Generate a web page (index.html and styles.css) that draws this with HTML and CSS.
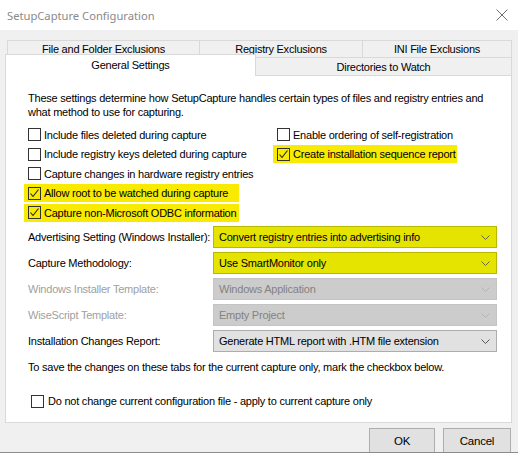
FILE: index.html
```html
<!DOCTYPE html>
<html>
<head>
<meta charset="utf-8">
<title>SetupCapture Configuration</title>
<link rel="stylesheet" href="styles.css">
</head>
<body>
<div class="window">
  <div class="titlebar">
    <span class="title">SetupCapture Configuration</span>
    <svg class="close" width="12" height="12" viewBox="0 0 12 12"><path d="M0.5 0.5L11.5 11.5M11.5 0.5L0.5 11.5" stroke="#6f6f6f" stroke-width="1" fill="none"/></svg>
  </div>
  <div class="tabs">
    <div class="tabrow row1">
      <div class="tab t1">File and Folder Exclusions</div>
      <div class="tab t2">Registry Exclusions</div>
      <div class="tab t3">INI File Exclusions</div>
    </div>
    <div class="tabrow row2">
      <div class="tab sel">General Settings</div>
      <div class="tab t5">Directories to Watch</div>
    </div>
  </div>
  <div class="panel">
    <p class="desc">These settings determine how SetupCapture handles certain types of files and registry entries and<br>what method to use for capturing.</p>
    <div class="checks">
      <label class="cb"><span class="box"></span><span>Include files deleted during capture</span></label>
      <label class="cb"><span class="box"></span><span>Enable ordering of self-registration</span></label>
      <label class="cb"><span class="box"></span><span>Include registry keys deleted during capture</span></label>
      <label class="cb hl hl-right"><span class="box"><svg width="11" height="11" viewBox="0 0 11 11"><path d="M1.5 5.5L4 8.5L9.5 1.5" stroke="#222" stroke-width="1.1" fill="none"/></svg></span><span>Create installation sequence report</span></label>
      <label class="cb"><span class="box"></span><span>Capture changes in hardware registry entries</span></label>
      <span class="empty"></span>
      <label class="cb hl hl-left"><span class="box"><svg width="11" height="11" viewBox="0 0 11 11"><path d="M1.5 5.5L4 8.5L9.5 1.5" stroke="#222" stroke-width="1.1" fill="none"/></svg></span><span>Allow root to be watched during capture</span></label>
      <span class="empty"></span>
      <label class="cb hl hl-left"><span class="box"><svg width="11" height="11" viewBox="0 0 11 11"><path d="M1.5 5.5L4 8.5L9.5 1.5" stroke="#222" stroke-width="1.1" fill="none"/></svg></span><span>Capture non-Microsoft ODBC information</span></label>
    </div>
    <div class="combos">
      <span class="lbl">Advertising Setting (Windows Installer):</span>
      <div class="combo yellow"><span>Convert registry entries into advertising info</span><svg width="9" height="5" viewBox="0 0 9 5"><path d="M0.5 0.5L4.5 4.5L8.5 0.5" stroke="#6b6b2a" fill="none"/></svg></div>
      <span class="lbl">Capture Methodology:</span>
      <div class="combo yellow"><span>Use SmartMonitor only</span><svg width="9" height="5" viewBox="0 0 9 5"><path d="M0.5 0.5L4.5 4.5L8.5 0.5" stroke="#6b6b2a" fill="none"/></svg></div>
      <span class="lbl disabled">Windows Installer Template:</span>
      <div class="combo off"><span>Windows Application</span><svg width="9" height="5" viewBox="0 0 9 5"><path d="M0.5 0.5L4.5 4.5L8.5 0.5" stroke="#b4b4b4" fill="none"/></svg></div>
      <span class="lbl disabled">WiseScript Template:</span>
      <div class="combo off"><span>Empty Project</span><svg width="9" height="5" viewBox="0 0 9 5"><path d="M0.5 0.5L4.5 4.5L8.5 0.5" stroke="#b4b4b4" fill="none"/></svg></div>
      <span class="lbl">Installation Changes Report:</span>
      <div class="combo"><span>Generate HTML report with .HTM file extension</span><svg width="9" height="5" viewBox="0 0 9 5"><path d="M0.5 0.5L4.5 4.5L8.5 0.5" stroke="#555" fill="none"/></svg></div>
    </div>
    <p class="note">To save the changes on these tabs for the current capture only, mark the checkbox below.</p>
    <label class="cb single"><span class="box"></span><span>Do not change current configuration file - apply to current capture only</span></label>
  </div>
  <div class="buttons">
    <div class="btn ok">OK</div>
    <div class="btn cancel">Cancel</div>
  </div>
</div>
</body>
</html>
```

FILE: styles.css
```css
* { box-sizing: border-box; }
html, body { margin: 0; padding: 0; }
body {
  width: 518px;
  height: 453px;
  overflow: hidden;
  background: #f0f0f0;
  font-family: "Liberation Sans", Arial, sans-serif;
  font-size: 11px;
  letter-spacing: -0.23px;
  color: #000;
}
.window {
  width: 518px;
  height: 453px;
  display: flex;
  flex-direction: column;
  border-bottom: 1px solid #8c8c8c;
}
.titlebar {
  height: 30px;
  background: #fff;
  display: flex;
  align-items: center;
  justify-content: space-between;
  padding: 0 10px 0 7px;
  flex-shrink: 0;
}
.title {
  font-family: "Noto Sans", "Open Sans", sans-serif;
  font-size: 11.2px;
  color: #8a8a8a;
  letter-spacing: 0;
}
.tabs { margin-top: 10px; }
.tabrow { display: flex; }
.row1 { margin-left: 7px; height: 17px; }
.row2 { margin-left: 5px; height: 18px; align-items: flex-end; }
.tab {
  display: flex;
  align-items: center;
  justify-content: center;
  border-top: 1px solid #d9d9d9;
  border-left: 1px solid #d9d9d9;
  background: #f0f0f0;
  white-space: nowrap;
  height: 100%;
}
.t1 { width: 192px; }
.t2 { width: 163px; }
.t3 { width: 150px; border-right: 1px solid #d9d9d9; }
.sel {
  width: 251px;
  height: 22px;
  margin-bottom: -1px;
  background: #fff;
  border-right: 1px solid #d9d9d9;
  padding-bottom: 1px;
  position: relative;
  z-index: 1;
  align-self: flex-end;
}
.t5 { width: 256px; border-left: none; border-right: 1px solid #d9d9d9; }
.panel {
  margin-left: 5px;
  width: 507px;
  height: 348px;
  flex-shrink: 0;
  background: #fff;
  border: 1px solid #d9d9d9;
  padding: 15px 0 0 22px;
}
.desc, .note { margin: 0; line-height: 14px; white-space: nowrap; }
.checks {
  margin: 6px 0 0 -4px;
  display: grid;
  grid-template-columns: 249px auto;
  grid-auto-rows: 19.5px;
  align-items: center;
}
.cb {
  display: flex;
  align-items: center;
  gap: 3px;
  height: 18px;
  padding-left: 4px;
  white-space: nowrap;
  justify-self: start;
}
.box {
  width: 13px;
  height: 13px;
  border: 1px solid #333;
  background: #fff;
  display: flex;
  align-items: center;
  justify-content: center;
  flex-shrink: 0;
}
.hl { background: #f8ea00; }
.hl .box { background: #f8ea00; }
.hl-left { width: 215px; }
.hl-right { width: 184px; }
.combos {
  margin-top: 3.5px;
  display: grid;
  grid-template-columns: 185px 284px;
  grid-auto-rows: 22px;
  row-gap: 4px;
  align-items: center;
}
.lbl { white-space: nowrap; }
.lbl.disabled { color: #a0a0a0; }
.combo {
  height: 22px;
  display: flex;
  align-items: center;
  justify-content: space-between;
  padding: 0 6px 0 5px;
  background: #e1e1e1;
  border: 1px solid #adadad;
  white-space: nowrap;
}
.combo.yellow { background: #e4e400; border-color: #b8b800; }
.combo.off { background: #cccccc; border-color: #c4c4c4; color: #838383; }
.note { margin-top: 8px; }
.single { margin-top: 18px; padding-left: 3px; gap: 4px; }
.buttons {
  margin-top: 5px;
  display: flex;
  justify-content: flex-end;
  gap: 8px;
  padding-right: 7px;
  flex: 1;
}
.btn {
  height: 100%;
  display: flex;
  align-items: center;
  justify-content: center;
  background: #e1e1e1;
  border: 1px solid #adadad;
  border-bottom: none;
  font-size: 11.5px;
}
.ok { width: 66px; }
.cancel { width: 68px; }
```
